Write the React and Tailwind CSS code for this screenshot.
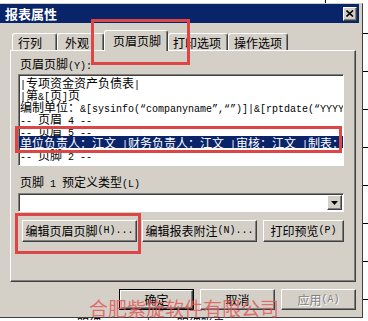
import React from 'react'

const raised =
  'border border-t-white border-l-white border-r-[#404040] border-b-[#404040] shadow-[inset_-1px_-1px_0_#808080]'
const sunken =
  'border border-t-[#808080] border-l-[#808080] border-r-white border-b-white shadow-[inset_1px_1px_0_#404040]'
const tabEdge =
  'border-t border-l border-r border-t-white border-l-white border-r-[#404040] shadow-[inset_-1px_0_0_#808080] rounded-t-[3px]'

// SimSun-like text: CJK glyphs 12px wide, latin glyphs 6px wide
function Mixed({ text }) {
  return text.split(/([\u3000-\u9fff\uff00-\uffef]+)/).map((part, i) =>
    i % 2 ? (
      <span key={i} className="font-['Noto_Sans_CJK_SC',sans-serif] text-[12px]">
        {part}
      </span>
    ) : (
      <span key={i} className="font-['Liberation_Mono',monospace] text-[10px]">
        {part}
      </span>
    )
  )
}

const lines = [
  '|专项资金资产负债表|',
  '|第&[页]页',
  '编制单位：&[sysinfo(“companyname”,“”)]|&[rptdate(“YYYY年MM月”)]',
  '-- 页眉 4 --',
  '-- 页眉 5 --',
  '单位负责人：江文 |财务负责人：江文 |审核：江文 |制表：江文',
  '-- 页脚 2 --',
]

function Tab({ label, className, selected }) {
  return (
    <div
      className={
        selected
          ? `relative z-10 -mb-px h-[21px] bg-[#d4d0c8] flex items-center ${tabEdge} ${className}`
          : `h-[17px] flex items-center pt-[1px] ${tabEdge} ${className}`
      }
    >
      <span className="font-['Noto_Sans_CJK_SC',sans-serif] text-[12px] leading-[12px]">{label}</span>
    </div>
  )
}

export default function App() {
  return (
    <div className="relative w-[368px] h-[321px] overflow-hidden bg-white text-black leading-[12px]">
      <div className="h-[3px] flex">
        <div className="ml-[325px] w-px bg-black" />
      </div>

      <div className="flex h-[315px]">
        <div className="w-[363px] bg-[#d4d0c8] border-t border-t-[#d4d0c8] border-r border-r-[#404040] border-b border-b-[#404040] pr-[3px] flex flex-col">
          {/* title bar */}
          <div className="h-[19px] bg-[#0a246a] flex items-center justify-between pl-[5px] pr-[2px]">
            <span className="font-['Noto_Sans_CJK_SC',sans-serif] text-[13px] font-bold text-white leading-[13px]">
              报表属性
            </span>
            <div className={`w-[14px] h-[14px] bg-[#d4d0c8] flex items-center justify-center ${raised}`}>
              <svg width="8" height="7" viewBox="0 0 8 7">
                <path d="M0.5 0.5 L7 6.5 M7 0.5 L0.5 6.5" stroke="#000" strokeWidth="1.6" />
              </svg>
            </div>
          </div>

          {/* tabs */}
          <div className="h-[27px] flex items-end pl-[12px]">
            <Tab label="行列" className="w-[45px] pl-[5px]" />
            <Tab label="外观" className="w-[47px] pl-[7px]" />
            <Tab label="页眉页脚" className="w-[64px] pl-[8px]" selected />
            <Tab label="打印选项" className="w-[60px] pl-[4px]" />
            <Tab label="操作选项" className="w-[60px] pl-[5px]" />
          </div>

          {/* panel */}
          <div className={`ml-[10px] w-[346px] h-[232px] flex flex-col ${raised}`}>
            <div className="mt-[6px] pl-[9px] h-[13px] leading-[13px] whitespace-pre">
              <Mixed text="页眉页脚(Y):" />
            </div>

            <div className={`mt-[4px] ml-[7px] w-[326px] h-[92px] bg-white overflow-hidden pt-[1px] ${sunken}`}>
              {lines.map((line, i) => (
                <div
                  key={i}
                  className={
                    i === 5
                      ? 'h-[12px] leading-[12px] whitespace-pre pl-[1px] w-max min-w-full bg-[#0a246a] text-white'
                      : 'h-[12px] leading-[12px] whitespace-pre pl-[1px] w-max'
                  }
                >
                  <Mixed text={line} />
                </div>
              ))}
            </div>

            <div className="mt-[9px] pl-[9px] h-[12px] whitespace-pre">
              <Mixed text="页脚 1 预定义类型(L)" />
            </div>

            <div className={`mt-[6px] ml-[7px] w-[326px] h-[19px] bg-white flex items-center justify-end pr-px ${sunken}`}>
              <div className={`w-[15px] h-[15px] bg-[#d4d0c8] flex items-center justify-center ${raised}`}>
                <svg width="7" height="4" viewBox="0 0 7 4">
                  <path d="M0 0 H7 L3.5 4 Z" fill="#000" />
                </svg>
              </div>
            </div>

            <div className="mt-[8px] ml-[11px] flex gap-[5px] h-[22px]">
              <div className={`w-[115px] flex items-center justify-center whitespace-pre ${raised}`}>
                <Mixed text="编辑页眉页脚(H)..." />
              </div>
              <div className={`w-[115px] flex items-center justify-center whitespace-pre ${raised}`}>
                <Mixed text="编辑报表附注(N)..." />
              </div>
              <div className={`ml-px w-[81px] flex items-center justify-center whitespace-pre ${raised}`}>
                <Mixed text="打印预览(P)" />
              </div>
            </div>
          </div>

          {/* dialog buttons */}
          <div className="mt-[7px] h-[21px] flex justify-end gap-[6px] pr-[3px]">
            <div className="w-[75px] border border-black">
              <div className={`h-full flex items-center justify-center ${raised}`}>
                <Mixed text="确定" />
              </div>
            </div>
            <div className={`w-[75px] flex items-center justify-center ${raised}`}>
              <Mixed text="取消" />
            </div>
            <div className={`w-[75px] flex items-center justify-center text-[#808080] [text-shadow:1px_1px_0_#fff] ${raised}`}>
              <Mixed text="应用(A)" />
            </div>
          </div>
        </div>

        {/* spreadsheet behind */}
        <div className="flex-1 flex flex-col pt-[30px] gap-[37px]">
          <div className="h-px bg-black" />
          <div className="h-px bg-black" />
          <div className="h-px bg-black" />
          <div className="h-px bg-black" />
          <div className="h-px bg-black" />
          <div className="h-px bg-black" />
          <div className="h-px bg-black" />
          <div className="h-px bg-black" />
        </div>
      </div>

      <div className="h-[3px] overflow-hidden whitespace-pre pl-[77px] font-['Noto_Sans_CJK_SC',sans-serif] text-[12px] leading-[12px] -mt-px">
        明细                 |          明细账户
      </div>

      {/* annotations */}
      <div className="absolute left-[91px] top-[19px] w-[99px] h-[46px] border-[3px] border-[#dc4646]" />
      <div className="absolute left-[15px] top-[126px] w-[327px] h-[27px] border-[3px] border-[#dc4646]" />
      <div className="absolute left-[15px] top-[213px] w-[126px] h-[41px] border-[3px] border-[#dc4646]" />
      <div className="absolute left-[89px] top-[298px] font-['Noto_Sans_CJK_SC',sans-serif] text-[19px] leading-[19px] text-[#e05a5a]/85 whitespace-pre">
        合肥紫旋软件有限公司
      </div>
    </div>
  )
}
